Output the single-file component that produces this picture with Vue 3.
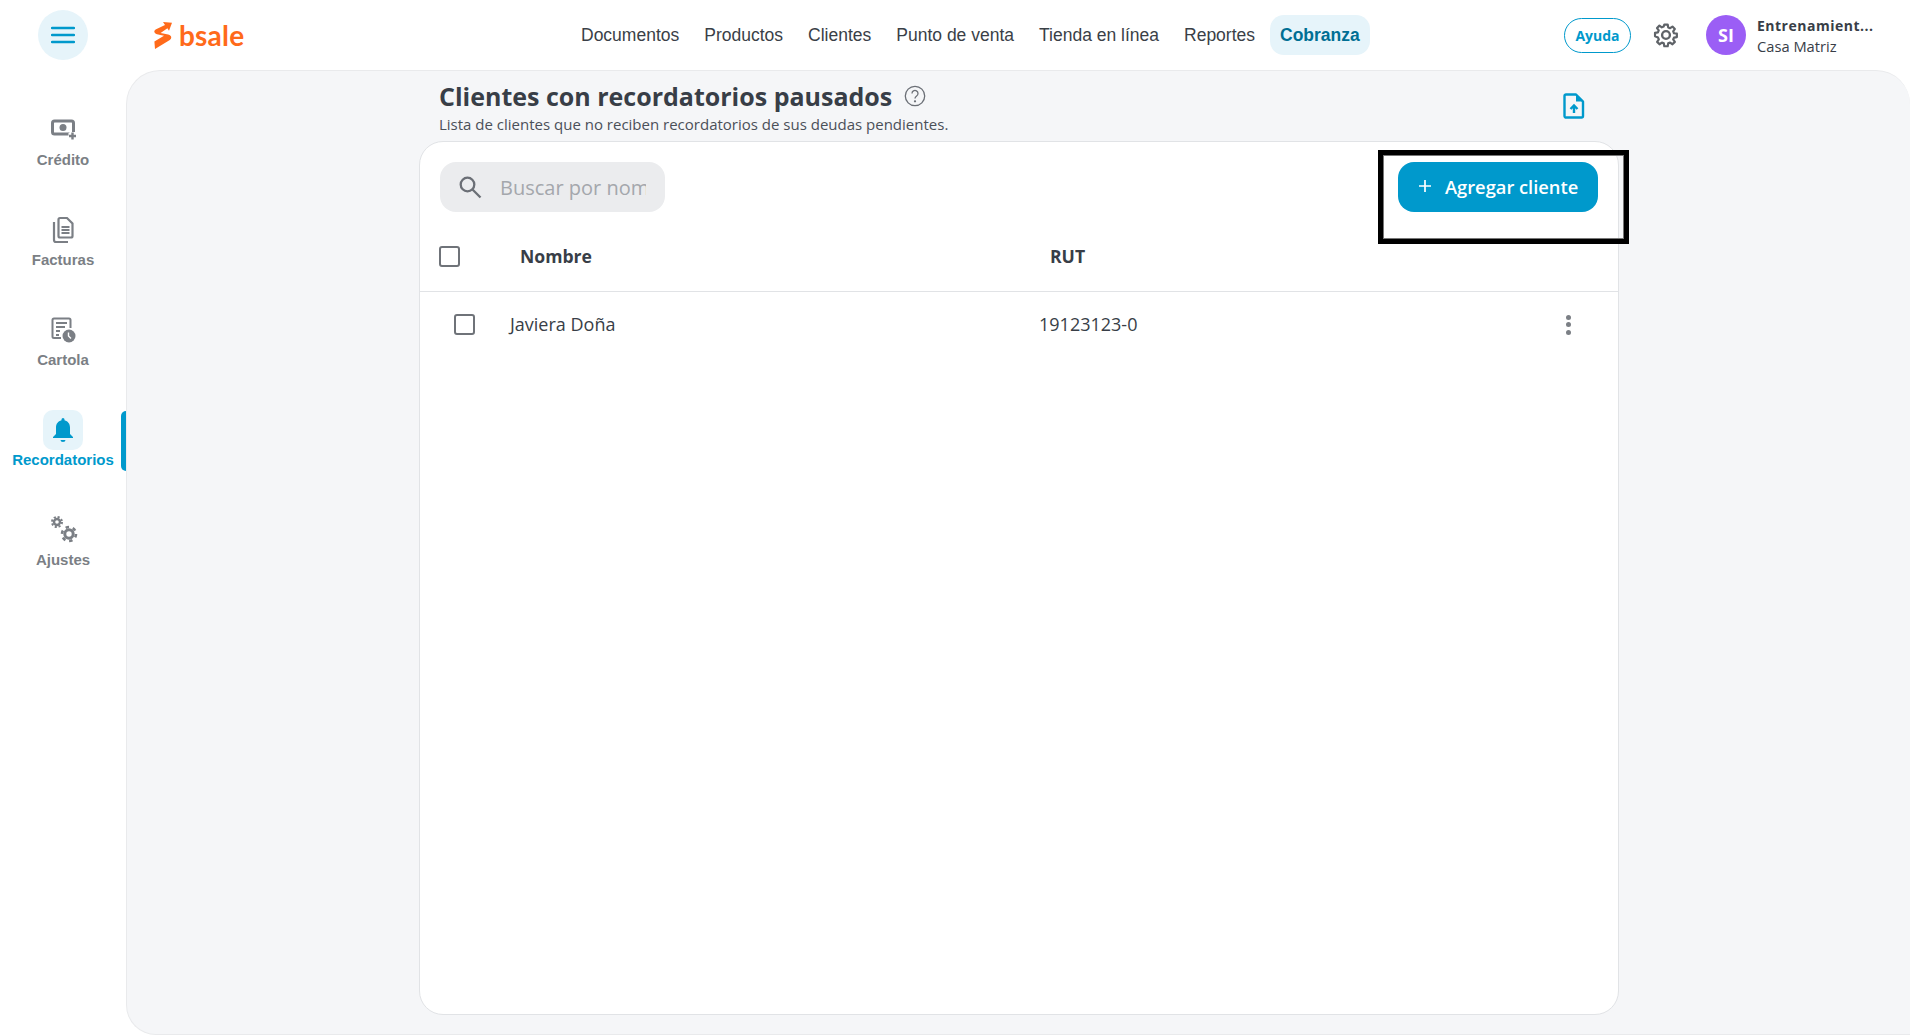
<script setup>
const navItems = ['Documentos', 'Productos', 'Clientes', 'Punto de venta', 'Tienda en línea', 'Reportes']
</script>

<template>
  <div class="app">
    <header class="topbar">
      <div class="burger-cell">
        <button class="burger" aria-label="Menú">
          <svg width="24" height="18" viewBox="0 0 24 18"><path d="M1 2h22M1 9h22M1 16h22" stroke="#0099cc" stroke-width="2.4" stroke-linecap="round" /></svg>
        </button>
      </div>
      <div class="logo">
        <svg width="19" height="27" viewBox="0 0 19 27">
          <path d="M11 3 9 0l9 .8-3 8-1.600-2.500L6.600 11l7.600 1.600c3.400.8 4 3.400 1.600 5.400L1 27l-.6-7.600 9.600-5.600-7-1.600C0 11.400-.6 9 1.600 7.400Z" fill="#ff6a1a" />
        </svg>
        <span class="logo-text">bsale</span>
      </div>
      <nav class="nav">
        <a v-for="item in navItems" :key="item" class="nav-link">{{ item }}</a>
        <a class="nav-link active">Cobranza</a>
      </nav>
      <div class="tools">
        <span class="help">Ayuda</span>
        <svg class="gear" width="26" height="26" viewBox="0 0 24 24" fill="none" stroke="#5f6368" stroke-width="2.200" stroke-linejoin="round">
          <path d="M10.300 2h3.400l.5 2.900 1.900.8 2.400-1.700 2.400 2.400-1.700 2.400.8 1.900 2.900.5v3.400l-2.900.5-.8 1.900 1.700 2.400-2.400 2.400-2.400-1.700-1.900.8-.5 2.900h-3.400l-.5-2.900-1.900-.8-2.400 1.700-2.400-2.400 1.700-2.400-.8-1.900L1 13.700v-3.400l2.900-.5.8-1.900L3 5.500l2.400-2.400 2.400 1.700 1.900-.8Z" transform="translate(12 12) scale(.92) translate(-12 -12.500)" />
          <circle cx="12" cy="12" r="3.600" />
        </svg>
        <span class="avatar">SI</span>
        <div class="account">
          <strong>Entrenamient...</strong>
          <span>Casa Matriz</span>
        </div>
      </div>
    </header>

    <div class="body">
      <aside class="sidebar">
        <a class="side-item">
          <span class="side-icon">
            <svg class="nudge" width="26" height="22" viewBox="0 0 26 22">
              <rect x="1.500" y="2" width="21" height="13" rx="2" fill="none" stroke="#7b7f85" stroke-width="3" />
              <circle cx="12" cy="8.500" r="3.500" fill="#7b7f85" />
              <path d="M21.500 13v8M17.500 17h8" stroke="#fff" stroke-width="6" />
              <path d="M21.500 13.500v7M18 17h7" stroke="#7b7f85" stroke-width="2.400" />
            </svg>
          </span>
          <span>Crédito</span>
        </a>
        <a class="side-item">
          <span class="side-icon">
            <svg width="22" height="28" viewBox="0 0 22 28" fill="none" stroke="#7b7f85" stroke-width="2.200">
              <path d="M8 2h7l5.500 5.500V20a1.500 1.500 0 0 1-1.500 1.500H8A1.500 1.500 0 0 1 6.500 20V3.500A1.500 1.500 0 0 1 8 2Z" />
              <path d="M2 6v18a2 2 0 0 0 2 2h12" />
              <path d="M9.500 11h8M9.500 14h8M9.500 17h8" stroke-width="1.800" />
            </svg>
          </span>
          <span>Facturas</span>
        </a>
        <a class="side-item">
          <span class="side-icon">
            <svg width="26" height="26" viewBox="0 0 26 26">
              <path d="M11 21H4a1.500 1.500 0 0 1-1.500-1.500V3A1.500 1.500 0 0 1 4 1.500h15A1.500 1.500 0 0 1 20.500 3v8" fill="none" stroke="#7b7f85" stroke-width="2" />
              <path d="M6 6h11M6 10h9M6 14h4M6 18h3" stroke="#7b7f85" stroke-width="2" />
              <circle cx="19" cy="19" r="6.500" fill="#7b7f85" />
              <path d="M18.500 15.500v3.500l2.500 2.500" fill="none" stroke="#fff" stroke-width="1.400" />
            </svg>
          </span>
          <span>Cartola</span>
        </a>
        <a class="side-item current">
          <span class="side-icon">
            <svg width="22" height="26" viewBox="0 0 22 26">
              <path d="M11 1a1.500 1.500 0 0 1 1.500 1.500v.8C16 4.200 18 7 18 10.500V17l3 3v1H1v-1l3-3v-6.500C4 7 6 4.200 9.500 3.300v-.8A1.500 1.500 0 0 1 11 1ZM8.500 23h5a2.500 2 0 0 1-5 0Z" fill="#0099cc" />
            </svg>
          </span>
          <span>Recordatorios</span>
          <i class="marker"></i>
        </a>
        <a class="side-item">
          <span class="side-icon">
            <svg class="nudge" width="28" height="28" viewBox="0 0 28 28" fill="none" stroke="#7b7f85">
              <circle cx="7" cy="6" r="3" stroke-width="2.400" />
              <circle cx="7" cy="6" r="5" stroke-width="2" stroke-dasharray="2.100 1.830" />
              <circle cx="19" cy="18" r="4.200" stroke-width="3" />
              <circle cx="19" cy="18" r="7" stroke-width="2.600" stroke-dasharray="3.500 3.830" />
            </svg>
          </span>
          <span>Ajustes</span>
        </a>
      </aside>

      <main class="panel">
        <div class="content">
          <div class="page-head">
            <div>
              <h1>Clientes con recordatorios pausados
                <svg width="22" height="22" viewBox="0 0 22 22" fill="none" stroke="#6b6f76" stroke-width="1.300">
                  <circle cx="11" cy="11" r="9.700" />
                  <path d="M8 8.500a3 3 0 1 1 4.600 2.500c-1 .7-1.600 1.200-1.600 2.500" />
                  <circle cx="11" cy="16.300" r=".5" />
                </svg>
              </h1>
              <p>Lista de clientes que no reciben recordatorios de sus deudas pendientes.</p>
            </div>
            <svg class="upload" width="22" height="26" viewBox="0 0 22 26" fill="none">
              <path d="M3 1.500h10l7 7V23a1.500 1.500 0 0 1-1.500 1.500h-15A1.500 1.500 0 0 1 1.500 23V3A1.500 1.500 0 0 1 3 1.500Z" stroke="#0099cc" stroke-width="2.400" stroke-linejoin="round" />
              <path d="M13 1.500V8.500h7Z" fill="#0099cc" />
              <path d="M11 20v-7M7.500 16 11 12.500l3.500 3.500" stroke="#0099cc" stroke-width="2.400" />
            </svg>
          </div>

          <section class="card">
            <div class="toolbar">
              <label class="search">
                <svg width="24" height="24" viewBox="0 0 24 24" fill="none" stroke="#6b6f76" stroke-width="2.300">
                  <circle cx="9.500" cy="9.500" r="6.800" />
                  <path d="m14.500 14.500 8 8" />
                </svg>
                <input type="text" placeholder="Buscar por nombre o RUT" />
              </label>
              <div class="add-wrap">
                <button class="add">
                  <svg width="14" height="14" viewBox="0 0 14 14"><path d="M7 1v12M1 7h12" stroke="#fff" stroke-width="1.700" /></svg>
                  Agregar cliente
                </button>
              </div>
            </div>

            <div class="thead">
              <span class="check"></span>
              <span class="col-name">Nombre</span>
              <span class="col-rut">RUT</span>
            </div>
            <div class="trow">
              <span class="check"></span>
              <span class="cell-name">Javiera Doña</span>
              <span class="cell-rut">19123123-0</span>
              <span class="dots"><i></i><i></i><i></i></span>
            </div>
          </section>
        </div>
      </main>
    </div>
  </div>
</template>

<style>
html, body { margin: 0; background: #fff; overflow: hidden; }
</style>

<style scoped>
.app {
  width: 1910px;
  height: 1035px;
  display: flex;
  flex-direction: column;
  font-family: "Open Sans", sans-serif;
  color: #383e47;
  background: #fff;
  overflow: hidden;
}
.topbar {
  height: 70px;
  flex: none;
  display: flex;
  align-items: center;
}
.burger-cell {
  width: 126px;
  flex: none;
  padding-left: 38px;
  box-sizing: border-box;
}
.burger {
  width: 50px;
  height: 50px;
  border: 0;
  padding: 0;
  border-radius: 50%;
  background: #e6f4fa;
  display: flex;
  align-items: center;
  justify-content: center;
}
.logo {
  width: 135px;
  margin-left: 28px;
  display: flex;
  align-items: center;
  gap: 6px;
}
.logo-text {
  font-family: Lato, sans-serif;
  font-size: 28px;
  font-weight: 700;
  line-height: 30px;
  letter-spacing: .2px;
  color: #ff6a1a;
}
.nav {
  display: flex;
  align-items: center;
  margin-left: 282px;
  gap: 5px;
  font-family: "Liberation Sans", sans-serif;
}
.nav-link {
  height: 40px;
  line-height: 40px;
  padding: 0 10px;
  border-radius: 14px;
  font-size: 17.5px;
  color: #3a3f47;
}
.nav-link.active {
  font-weight: 700;
  color: #006f94;
  background: #e6f4fa;
}
.tools {
  margin-left: auto;
  display: flex;
  align-items: center;
  width: 346px;
  box-sizing: border-box;
}
.help {
  width: 67px;
  height: 35px;
  box-sizing: border-box;
  border: 1px solid #0099cc;
  border-radius: 18px;
  color: #0099cc;
  font-size: 14px;
  font-weight: 700;
  line-height: 33px;
  text-align: center;
}
.gear { margin-left: 22px; }
.avatar {
  width: 40px;
  height: 40px;
  margin-left: 27px;
  border-radius: 50%;
  background: #9b5ef5;
  color: #fff;
  font-size: 18px;
  font-weight: 700;
  line-height: 40px;
  text-align: center;
}
.account {
  margin-left: 11px;
  display: flex;
  flex-direction: column;
  font-size: 14px;
  line-height: 20px;
  padding-top: 1px;
}
.account strong { letter-spacing: .5px; }
.account span { font-size: 14.7px; }
.body {
  flex: 1;
  display: flex;
  min-height: 0;
}
.sidebar {
  width: 126px;
  flex: none;
  padding-top: 40px;
  box-sizing: border-box;
  display: flex;
  flex-direction: column;
}
.side-item {
  position: relative;
  height: 100px;
  display: flex;
  flex-direction: column;
  align-items: center;
  font-family: "Liberation Sans", sans-serif;
  font-size: 15px;
  font-weight: 700;
  line-height: 20px;
  color: #7b7f85;
}
.side-icon {
  width: 40px;
  height: 40px;
  display: flex;
  align-items: center;
  justify-content: center;
  border-radius: 10px;
}
.nudge { margin-left: 2px; }
.current { color: #0099cc; }
.current .side-icon { background: #e6f4fa; }
.marker {
  position: absolute;
  right: 0;
  top: 1px;
  width: 5px;
  height: 60px;
  border-radius: 5px 0 0 5px;
  background: #0099cc;
}
.panel {
  flex: 1;
  background: #f5f6f8;
  border: 1px solid #e9eaec;
  border-radius: 34px 34px 0 30px;
  border-right: 0;
  box-sizing: border-box;
  padding-left: 292px;
}
.content {
  width: 1200px;
  display: flex;
  flex-direction: column;
}
.page-head {
  height: 70px;
  padding-left: 20px;
  padding-right: 34px;
  display: flex;
  justify-content: space-between;
  align-items: flex-start;
}
h1 {
  margin: 8px 0 0;
  font-size: 25px;
  font-weight: 700;
  line-height: 34px;
  display: flex;
  align-items: center;
  gap: 12px;
}
.page-head p {
  margin: 2px 0 0;
  font-size: 15px;
  line-height: 19px;
  color: #4b5058;
}
.upload { margin-top: 22px; }
.card {
  height: 874px;
  box-sizing: border-box;
  background: #fff;
  border: 1px solid #e1e3e6;
  border-radius: 24px;
  display: flex;
  flex-direction: column;
}
.toolbar {
  display: flex;
  flex: none;
  justify-content: space-between;
  padding: 20px 20px 0 20px;
  height: 69px;
  box-sizing: border-box;
}
.search {
  width: 225px;
  height: 50px;
  box-sizing: border-box;
  padding: 0 19px 0 18px;
  display: flex;
  align-items: center;
  gap: 18px;
  background: #ebecee;
  border-radius: 16px;
}
.search svg { flex: none; }
.search input {
  width: 100%;
  min-width: 0;
  border: 0;
  padding: 0;
  outline: 0;
  background: transparent;
  font-family: inherit;
  font-size: 20px;
  color: #383e47;
}
.search input::placeholder { color: #a4a7ac; opacity: 1; }
.add-wrap {
  position: relative;
  width: 200px;
  height: 50px;
}
.add-wrap::after {
  content: "";
  position: absolute;
  left: -20px;
  top: -12px;
  width: 251px;
  height: 94px;
  box-sizing: border-box;
  border: 5px solid #000;
  outline: 1px solid #777;
  outline-offset: -6px;
  pointer-events: none;
}
.add {
  width: 200px;
  height: 50px;
  border: 0;
  border-radius: 16px;
  background: #0099cc;
  color: #fff;
  font-family: inherit;
  font-size: 18.3px;
  font-weight: 600;
  display: flex;
  align-items: center;
  gap: 13px;
  padding: 0 0 2px 20px;
  box-sizing: border-box;
}
.thead {
  margin-top: 19px;
  height: 62px;
  flex: none;
  box-sizing: border-box;
  border-bottom: 1px solid #e1e3e6;
  display: flex;
  align-items: center;
  padding: 0 0 8px 19px;
  font-size: 17.6px;
  font-weight: 700;
}
.col-name, .col-rut { margin-bottom: 2px; }
.check {
  width: 21px;
  height: 21px;
  box-sizing: border-box;
  border: 2px solid #6f7379;
  border-radius: 3px;
  flex: none;
}
.col-name { margin-left: 60px; width: 530px; }
.trow {
  height: 65px;
  flex: none;
  display: flex;
  align-items: center;
  padding: 0 0 0 34px;
  font-size: 18px;
}
.cell-name, .cell-rut { margin-bottom: 2px; }
.cell-name { margin-left: 35px; width: 529px; }
.cell-rut { width: 527px; }
.dots {
  width: 6px;
  display: flex;
  flex-direction: column;
  gap: 2.500px;
}
.dots i {
  width: 5px;
  height: 5px;
  border-radius: 50%;
  background: #7b7f85;
}
</style>
